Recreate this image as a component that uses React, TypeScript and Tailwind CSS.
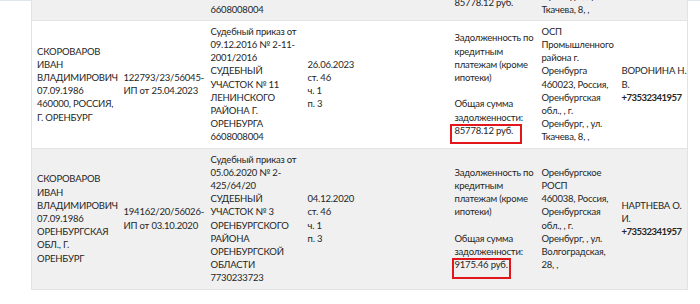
import React from 'react';

type Row = {
  debtor: string[];
  ip: string[];
  doc: string[];
  end: string[];
  subject: string[];
  amount: string;
  dept: string[];
  bailiff: string[];
  phone: string;
  mark?: { left: number; top: number; width: number; height: number };
  shade: boolean;
};

const subjectLines = ['Задолженность по', 'кредитным', 'платежам (кроме', 'ипотеки)'];

const firstCase = {
  debtor: ['СКОРОВАРОВ', 'ИВАН', 'ВЛАДИМИРОВИЧ', '07.09.1986', '460000, РОССИЯ,', 'Г. ОРЕНБУРГ'],
  ip: ['122793/23/56045-', 'ИП от 25.04.2023'],
  doc: [
    'Судебный приказ от',
    '09.12.2016 № 2-11-',
    '2001/2016',
    'СУДЕБНЫЙ',
    'УЧАСТОК № 11',
    'ЛЕНИНСКОГО',
    'РАЙОНА Г.',
    'ОРЕНБУРГА',
    '6608008004',
  ],
  end: ['26.06.2023', 'ст. 46', 'ч. 1', 'п. 3'],
  subject: subjectLines,
  amount: '85778.12 руб.',
  dept: [
    'ОСП',
    'Промышленного',
    'района г.',
    'Оренбурга',
    '460023, Россия,',
    'Оренбургская',
    'обл., , г.',
    'Оренбург, , ул.',
    'Ткачева, 8, ,',
  ],
  bailiff: ['ВОРОНИНА Н.', 'В.'],
  phone: '+73532341957',
};

const rows: Row[] = [
  { ...firstCase, shade: true },
  { ...firstCase, shade: false, mark: { left: -5, top: -1, width: 72, height: 20 } },
  {
    debtor: ['СКОРОВАРОВ', 'ИВАН', 'ВЛАДИМИРОВИЧ', '07.09.1986', 'ОРЕНБУРГСКАЯ', 'ОБЛ., Г.', 'ОРЕНБУРГ'],
    ip: ['194162/20/56026-', 'ИП от 03.10.2020'],
    doc: [
      'Судебный приказ от',
      '05.06.2020 № 2-',
      '425/64/20',
      'СУДЕБНЫЙ',
      'УЧАСТОК № 3',
      'ОРЕНБУРГСКОГО',
      'РАЙОНА',
      'ОРЕНБУРГСКОЙ',
      'ОБЛАСТИ',
      '7730233723',
    ],
    end: ['04.12.2020', 'ст. 46', 'ч. 1', 'п. 3'],
    subject: subjectLines,
    amount: '9175.46 руб.',
    dept: [
      'Оренбургское',
      'РОСП',
      '460038, Россия,',
      'Оренбургская',
      'обл., , г.',
      'Оренбург, , ул.',
      'Волгоградская,',
      '28, ,',
    ],
    bailiff: ['НАРТНЕВА О.', 'И.'],
    phone: '+73532341957',
    shade: true,
    mark: { left: -3, top: -1, width: 59, height: 21 },
  },
];

function Lines({ items }: { items: string[] }) {
  return (
    <>
      {items.map((t, i) => (
        <div key={i} className="whitespace-nowrap">
          {t}
        </div>
      ))}
    </>
  );
}

const cell = 'align-middle pl-[5px] pr-0 py-[4px]';

function CaseRow({ row }: { row: Row }) {
  return (
    <tr className={`border-b border-[#e3e3e3] ${row.shade ? 'bg-[#f0f0f0]' : 'bg-white'}`}>
      <td className={cell}>
        <Lines items={row.debtor} />
      </td>
      <td className={cell}>
        <Lines items={row.ip} />
      </td>
      <td className={cell}>
        <Lines items={row.doc} />
      </td>
      <td className={cell}>
        <Lines items={row.end} />
      </td>
      <td className={cell}></td>
      <td className={cell}>
        <Lines items={row.subject} />
        <div className="h-[13.2px]" />
        <div className="whitespace-nowrap">Общая сумма</div>
        <div className="whitespace-nowrap">задолженности:</div>
        <div className="whitespace-nowrap">
          <span className="relative">
            {row.amount}
            {row.mark && (
              <span
                className="absolute border-2 border-[#e3161b]"
                style={{
                  left: row.mark.left,
                  top: row.mark.top,
                  width: row.mark.width,
                  height: row.mark.height,
                }}
              />
            )}
          </span>
        </div>
      </td>
      <td className={cell}>
        <Lines items={row.dept} />
      </td>
      <td className={cell}>
        <Lines items={row.bailiff} />
        <div className="whitespace-nowrap font-bold tracking-[-0.5px]">{row.phone}</div>
      </td>
    </tr>
  );
}

export default function App() {
  return (
    <div
      className="w-[700px] h-[304px] overflow-hidden bg-white text-[#262626] text-[9.5px] leading-[13.2px] tracking-[-0.2px]"
      style={{ fontFamily: 'Lato, "Liberation Sans", sans-serif' }}
    >
      <div className="h-px bg-[#dfe5ee]" />
      <div className="pl-[31px]">
        <table className="-mt-[108px] w-[656px] table-fixed border-collapse border-x border-[#e3e3e3]">
          <colgroup>
            <col className="w-[87px]" />
            <col className="w-[87px]" />
            <col className="w-[97px]" />
            <col className="w-[73px]" />
            <col className="w-[74px]" />
            <col className="w-[87px]" />
            <col className="w-[80px]" />
            <col className="w-[71px]" />
          </colgroup>
          <tbody>
            {rows.map((r, i) => (
              <CaseRow key={i} row={r} />
            ))}
          </tbody>
        </table>
      </div>
    </div>
  );
}
